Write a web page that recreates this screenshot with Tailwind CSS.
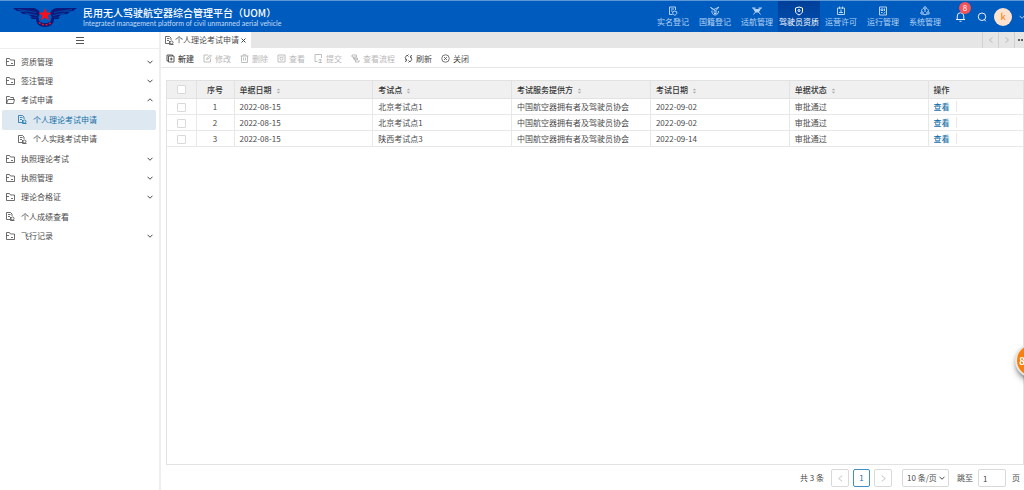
<!DOCTYPE html>
<html lang="zh-CN">
<head>
    <meta charset="UTF-8">
    <meta name="viewport" content="width=device-width, initial-scale=1.0">
    <title>民用无人驾驶航空器综合管理平台（UOM）</title>
    <script src="https://cdn.jsdelivr.net/npm/@tailwindcss/browser@4"></script>
</head>
<body class="h-screen flex flex-col overflow-hidden bg-white text-[8px] leading-[12px] text-[#4a4a4a] font-['Noto_Sans_CJK_SC',sans-serif]">
    <!-- 图标 -->
    <svg class="hidden">
        <symbol id="i-folder" viewBox="0 0 9 8" fill="none" stroke="currentColor" stroke-width=".8"><path d="M.5 7.500v-7h3l1 1.500h4v5.500zM.5 3.500h2.500M5 5.500h2"/></symbol>
        <symbol id="i-folder-open" viewBox="0 0 9 8" fill="none" stroke="currentColor" stroke-width=".8"><path d="M.5 7.500v-7h3l1 1h3v2M.5 7.500l1.500-4h6.500l-1 4z"/></symbol>
        <symbol id="i-doc" viewBox="0 0 9 9" fill="none" stroke="currentColor" stroke-width=".8"><path d="M4 7.500H.5v-7h4l1.500 1.500v2M2 2.500h2.500M2 4.500h2"/><circle cx="6.500" cy="6.500" r="1.500"/><path d="M4.500 5v3.500h4"/></symbol>
        <symbol id="i-down" viewBox="0 0 12 12" fill="none" stroke="currentColor" stroke-width="2"><path d="M1 3.500l5 5 5-5"/></symbol>
        <symbol id="i-up" viewBox="0 0 12 12" fill="none" stroke="currentColor" stroke-width="2"><path d="M1 8.500l5-5 5 5"/></symbol>
        <symbol id="i-left" viewBox="0 0 12 12" fill="none" stroke="currentColor" stroke-width="1.500"><path d="M9 1L3 6l6 5"/></symbol>
        <symbol id="i-right" viewBox="0 0 12 12" fill="none" stroke="currentColor" stroke-width="1.500"><path d="M3 1l6 5-6 5"/></symbol>
        <symbol id="i-sort" viewBox="0 0 10 12" fill="currentColor"><path d="M5 1l3.500 3.500h-7zM5 11l3.500-3.500h-7z"/></symbol>
    </svg>

    <!-- 顶部导航 -->
    <header class="h-8 shrink-0 flex items-center bg-[#005bbf] border-t border-[#5d97d6] text-white">
        <svg class="w-16 h-5 ml-[13px] shrink-0" viewBox="0 0 64 20">
            <g fill="#0b1a7c">
                <path d="M0 1h19c4 0 7 2 8 5l-2 5-6-1-3-2h4L10 7 7 5h9L4 4z"/>
                <path d="M64 1H45c-4 0-7 2-8 5l2 5 6-1 3-2h-4l10-1 3-2h-9l12-1z"/>
                <path d="M17 10l9 1c-1 3 2 5 6 5s7-2 6-5l9-1-2 2h-4c0 5-4 8-9 8s-9-3-9-8h-4z"/>
            </g>
            <path stroke="#005bbf" stroke-width=".7" d="M5 2.500l18 3M12 6l12 2.500M59 2.500l-18 3M52 6L40 8.500"/>
            <path fill="#f5101c" d="M32 1l1.700 4.600 4.900.2-3.900 3 1.400 4.700L32 10.800l-4.100 2.700 1.400-4.700-3.900-3 4.900-.2z"/>
            <path stroke="#f5101c" stroke-width="1.500" stroke-dasharray="2 1.500" fill="none" d="M26 15.500c3 3 9 3 12 0"/>
        </svg>
        <div class="ml-1.5 whitespace-nowrap">
            <h1 class="text-[10px] leading-[12px] font-medium">民用无人驾驶航空器综合管理平台（UOM）</h1>
            <p class="text-[7px] leading-[8px] text-[#c5dcf5] font-['Lato',sans-serif]">Integrated management platform of civil unmanned aerial vehicle</p>
        </div>
        <nav class="ml-auto self-stretch flex text-[#b4d2f2] whitespace-nowrap">
            <a href="#" class="w-[42px] flex flex-col items-center pt-[5px]">
                <svg class="size-[10px]" viewBox="0 0 20 20" fill="none" stroke="currentColor" stroke-width="2"><path d="M9 17H3V2h12v6M6 6h6M6 10h3"/><path d="M13.500 10l4 1.500v3c0 2-2 3-4 4-2-1-4-2-4-4v-3z"/></svg>
                <span>实名登记</span>
            </a>
            <a href="#" class="w-[42px] flex flex-col items-center pt-[5px]">
                <svg class="size-[10px]" viewBox="0 0 20 20" fill="none" stroke="currentColor" stroke-width="2"><path d="M1 3l7 4 10-5-7 8zM4 9c-1 5 2 9 6 9s7-3 7-8M7 12h7M8 15h5"/></svg>
                <span>国籍登记</span>
            </a>
            <a href="#" class="w-[42px] flex flex-col items-center pt-[5px]">
                <svg class="size-[10px]" viewBox="0 0 20 20" fill="none" stroke="currentColor" stroke-width="2"><path d="M0 4h7M13 4h7M7 12l-4 5M13 12l4 5"/><path fill="currentColor" d="M3 5l5 2h4l5-2-4 7H7z"/></svg>
                <span>适航管理</span>
            </a>
            <a href="#" class="w-[42px] flex flex-col items-center pt-[5px] bg-linear-to-b from-[#003f99] to-[#0050b0] text-white" aria-current="page">
                <svg class="size-[10px]" viewBox="0 0 20 20" fill="none" stroke="currentColor" stroke-width="2"><path d="M10 2l7 2v6c0 4-3 6-7 8-4-2-7-4-7-8V4z"/><circle cx="10" cy="9" r="2"/></svg>
                <span>驾驶员资质</span>
            </a>
            <a href="#" class="w-[42px] flex flex-col items-center pt-[5px]">
                <svg class="size-[10px]" viewBox="0 0 20 20" fill="none" stroke="currentColor" stroke-width="2"><path d="M3 4h14v13H3zM7 1v5M13 1v5M10 7v5M6 13h8"/></svg>
                <span>运营许可</span>
            </a>
            <a href="#" class="w-[42px] flex flex-col items-center pt-[5px]">
                <svg class="size-[10px]" viewBox="0 0 20 20" fill="none" stroke="currentColor" stroke-width="2"><path d="M3 2h14v16H3zM6 6h4v3H6zM13 5v5M6 13h3M11 15l4-3"/></svg>
                <span>运行管理</span>
            </a>
            <a href="#" class="w-[42px] flex flex-col items-center pt-[5px]">
                <svg class="size-[10px]" viewBox="0 0 20 20" fill="none" stroke="currentColor" stroke-width="2"><circle cx="10" cy="4" r="2.500"/><circle cx="4" cy="14" r="2.500"/><circle cx="16" cy="14" r="2.500"/><path d="M7 5c-3 1-4 3-4 6M13 5c3 1 4 3 4 6M6 16c2 2 6 2 8 0M10 7v5"/></svg>
                <span>系统管理</span>
            </a>
        </nav>
        <button class="relative ml-[9px]" aria-label="通知">
            <svg class="size-[11px]" viewBox="0 0 22 22" fill="none" stroke="currentColor" stroke-width="1.800"><path d="M2 17h18M4.500 17V10a6.500 6.500 0 0 1 13 0v7M9 20.500h4"/></svg>
            <span class="absolute -top-[9px] left-[4px] size-3 rounded-full bg-[#f5535a] text-center">8</span>
        </button>
        <button class="ml-[11px]" aria-label="搜索">
            <svg class="size-[10px]" viewBox="0 0 20 20" fill="none" stroke="currentColor" stroke-width="1.800"><circle cx="10" cy="9.500" r="7.500"/><path d="M14.500 15l3 3.500"/></svg>
        </button>
        <button class="ml-[7px] size-[18px] rounded-full bg-[#fde3cf] text-[#f58a1f] text-[9px] font-medium">k</button>
        <svg class="size-[6px] ml-[7px] -mr-px shrink-0 opacity-70"><use href="#i-down"/></svg>
    </header>

    <div class="flex-1 min-h-0 flex">
        <!-- 侧边菜单 -->
        <aside class="w-[161px] shrink-0 border-r-2 border-[#eee]">
            <button class="w-full h-[17px] flex items-center justify-center border-b border-[#eee]" aria-label="收起菜单">
                <svg class="w-2 h-[7px]" viewBox="0 0 8 7" stroke="#555" shape-rendering="crispEdges"><path d="M0 .5h8M0 3.500h8M0 6.500h8"/></svg>
            </button>
            <nav class="mt-[3px] h-[194px] grid grid-rows-10 pl-0.5 pr-[3px]">
                <a href="#" class="flex items-center pl-1 pr-[3px]"><svg class="w-[9px] h-2 mr-[6px]"><use href="#i-folder"/></svg>资质管理<svg class="size-[6px] ml-auto"><use href="#i-down"/></svg></a>
                <a href="#" class="flex items-center pl-1 pr-[3px]"><svg class="w-[9px] h-2 mr-[6px]"><use href="#i-folder"/></svg>签注管理<svg class="size-[6px] ml-auto"><use href="#i-down"/></svg></a>
                <a href="#" class="flex items-center pl-1 pr-[3px]"><svg class="w-[9px] h-2 mr-[6px]"><use href="#i-folder-open"/></svg>考试申请<svg class="size-[6px] ml-auto"><use href="#i-up"/></svg></a>
                <a href="#" class="flex items-center pl-4 rounded-xs bg-[#dde8f1] text-[#1670a8]" aria-current="page"><svg class="size-[9px] mr-[6px]"><use href="#i-doc"/></svg>个人理论考试申请</a>
                <a href="#" class="flex items-center pl-4"><svg class="size-[9px] mr-[6px]"><use href="#i-doc"/></svg>个人实践考试申请</a>
                <a href="#" class="flex items-center pl-1 pr-[3px]"><svg class="w-[9px] h-2 mr-[6px]"><use href="#i-folder"/></svg>执照理论考试<svg class="size-[6px] ml-auto"><use href="#i-down"/></svg></a>
                <a href="#" class="flex items-center pl-1 pr-[3px]"><svg class="w-[9px] h-2 mr-[6px]"><use href="#i-folder"/></svg>执照管理<svg class="size-[6px] ml-auto"><use href="#i-down"/></svg></a>
                <a href="#" class="flex items-center pl-1 pr-[3px]"><svg class="w-[9px] h-2 mr-[6px]"><use href="#i-folder"/></svg>理论合格证<svg class="size-[6px] ml-auto"><use href="#i-down"/></svg></a>
                <a href="#" class="flex items-center pl-1"><svg class="size-[9px] mr-[6px]"><use href="#i-doc"/></svg>个人成绩查看</a>
                <a href="#" class="flex items-center pl-1 pr-[3px]"><svg class="w-[9px] h-2 mr-[6px]"><use href="#i-folder"/></svg>飞行记录<svg class="size-[6px] ml-auto"><use href="#i-down"/></svg></a>
            </nav>
        </aside>

        <main class="flex-1 min-w-0 flex flex-col">
            <!-- 页签 -->
            <div class="h-4 shrink-0 flex bg-[#e6e6e6]">
                <div class="flex items-center bg-white pl-1 pr-[5px]">
                    <svg class="size-[9px] mr-px"><use href="#i-doc"/></svg>
                    <span>个人理论考试申请</span>
                    <button class="ml-0.5" aria-label="关闭页签"><svg class="size-[5px]" viewBox="0 0 10 10" stroke="currentColor" stroke-width="2"><path d="M1 1l8 8M9 1l-8 8"/></svg></button>
                </div>
                <div class="ml-auto flex text-[#aaa]">
                    <button class="w-4 border-l border-[#d0d0d0] flex items-center justify-center" aria-label="向左"><svg class="size-[6px]"><use href="#i-left"/></svg></button>
                    <button class="w-4 border-l border-[#d0d0d0] flex items-center justify-center" aria-label="向右"><svg class="size-[6px]"><use href="#i-right"/></svg></button>
                    <button class="w-[10px] pl-[3px] border-l border-[#d0d0d0] flex items-center overflow-hidden text-[#333]" aria-label="更多"><svg class="w-2 h-1 shrink-0" viewBox="0 0 8 4" fill="currentColor"><circle cx="1" cy="2" r="1"/><circle cx="4" cy="2" r="1"/><circle cx="7" cy="2" r="1"/></svg></button>
                </div>
            </div>

            <!-- 工具栏 -->
            <div class="h-5 shrink-0 flex items-center gap-[9px] pl-[5px] pt-0.5 border-b border-[#e6e6e6] whitespace-nowrap">
                <button class="flex items-center gap-[3px] font-medium"><svg class="size-[9px]" viewBox="0 0 18 18" fill="none" stroke="currentColor" stroke-width="1.800"><path d="M5 4h11v12H5zM5 14H2V2h11v2M10.500 7v6M7.500 10h6"/></svg>新建</button>
                <button disabled class="flex items-center gap-[3px] text-[#b8b8b8]"><svg class="size-[9px]" viewBox="0 0 18 18" fill="none" stroke="currentColor" stroke-width="1.800"><path d="M11 2H2v14h13V9M7 11l1-3 7-6 2 2-7 6z"/></svg>修改</button>
                <button disabled class="flex items-center gap-[3px] text-[#b8b8b8]"><svg class="size-[9px]" viewBox="0 0 18 18" fill="none" stroke="currentColor" stroke-width="1.800"><path d="M1 4h16M6 4V1.500h6V4M3 4v13h12V4M7 7v6M11 7v6"/></svg>删除</button>
                <button disabled class="flex items-center gap-[3px] text-[#b8b8b8]"><svg class="size-[9px]" viewBox="0 0 18 18" fill="none" stroke="currentColor" stroke-width="1.800"><path d="M2 2h14v14H2zM5 5.500h2M11 5.500h2"/><circle cx="9" cy="9.500" r="3"/></svg>查看</button>
                <button disabled class="flex items-center gap-[3px] text-[#b8b8b8]"><svg class="size-[9px]" viewBox="0 0 18 18" fill="none" stroke="currentColor" stroke-width="1.800"><path d="M7 15H2V1h13v7M12.500 17V10M9.500 13l3-3 3 3M9 17h7"/></svg>提交</button>
                <button disabled class="flex items-center gap-[3px] text-[#b8b8b8]"><svg class="size-[9px]" viewBox="0 0 18 18" fill="none" stroke="currentColor" stroke-width="1.800"><path d="M2 2h9v4H2zM5 6v4h9M7 8h6v4H7zM9 12v4h7v-4"/></svg>查看流程</button>
                <button class="flex items-center gap-[3px]"><svg class="size-[9px]" viewBox="0 0 18 18" fill="none" stroke="currentColor" stroke-width="1.800"><path d="M8 3H5L2.500 7l2 5M2 15l3-1-1-4M10 15h3l2.500-4-2-5M16 3l-3 1 1 4M9 1l-2 2 2 2M9 13l2 2-2 2"/></svg>刷新</button>
                <button class="flex items-center gap-[3px]"><svg class="size-[9px]" viewBox="0 0 18 18" fill="none" stroke="currentColor" stroke-width="1.500"><circle cx="9" cy="9" r="7.500"/><path d="M6 6l6 6M12 6l-6 6"/></svg>关闭</button>
            </div>

            <!-- 数据表格 -->
            <div class="flex-1 min-h-0 mt-3 ml-[5px] border border-[#e2e2e2]">
                <table class="w-full table-fixed border-collapse whitespace-nowrap">
                    <colgroup>
                        <col class="w-[29px]">
                        <col class="w-[38px]">
                        <col><col><col><col><col>
                        <col class="w-[95px]">
                    </colgroup>
                    <thead class="bg-[#f0f0f0] text-left text-[#333] [&_th]:pt-px [&_th]:font-medium [&_th]:border-r [&_th]:border-b [&_th]:border-[#e2e2e2] [&_th:last-child]:border-r-0">
                        <tr class="h-[17px]">
                            <th><input type="checkbox" aria-label="全选" class="block mx-auto size-[9px] appearance-none border border-[#d9d9d9] rounded-[1px] bg-white"></th>
                            <th class="text-center">序号</th>
                            <th class="pl-[5px]">单据日期<svg class="inline w-[5px] h-[6px] ml-1 text-[#aaa]"><use href="#i-sort"/></svg></th>
                            <th class="pl-[5px]">考试点<svg class="inline w-[5px] h-[6px] ml-1 text-[#aaa]"><use href="#i-sort"/></svg></th>
                            <th class="pl-[5px]">考试服务提供方<svg class="inline w-[5px] h-[6px] ml-1 text-[#aaa]"><use href="#i-sort"/></svg></th>
                            <th class="pl-[5px]">考试日期<svg class="inline w-[5px] h-[6px] ml-1 text-[#aaa]"><use href="#i-sort"/></svg></th>
                            <th class="pl-[5px]">单据状态<svg class="inline w-[5px] h-[6px] ml-1 text-[#aaa]"><use href="#i-sort"/></svg></th>
                            <th class="pl-[5px]">操作</th>
                        </tr>
                    </thead>
                    <tbody class="[&_td]:pt-0.5 [&_td]:border-r [&_td]:border-b [&_td]:border-[#e8e8e8] [&_td:last-child]:border-r-0">
                        <tr class="h-4">
                            <td><input type="checkbox" aria-label="选择第1行" class="block mx-auto size-[9px] appearance-none border border-[#d9d9d9] rounded-[1px] bg-white"></td>
                            <td class="text-center">1</td>
                            <td class="pl-[5px]">2022-08-15</td>
                            <td class="pl-[5px]">北京考试点1</td>
                            <td class="pl-[5px]">中国航空器拥有者及驾驶员协会</td>
                            <td class="pl-[5px]">2022-09-02</td>
                            <td class="pl-[5px]">审批通过</td>
                            <td class="pl-[5px]"><a href="#" class="pr-[6px] border-r border-[#e8e8e8] font-medium text-[#1670a8]">查看</a></td>
                        </tr>
                        <tr class="h-4">
                            <td><input type="checkbox" aria-label="选择第2行" class="block mx-auto size-[9px] appearance-none border border-[#d9d9d9] rounded-[1px] bg-white"></td>
                            <td class="text-center">2</td>
                            <td class="pl-[5px]">2022-08-15</td>
                            <td class="pl-[5px]">北京考试点1</td>
                            <td class="pl-[5px]">中国航空器拥有者及驾驶员协会</td>
                            <td class="pl-[5px]">2022-09-02</td>
                            <td class="pl-[5px]">审批通过</td>
                            <td class="pl-[5px]"><a href="#" class="pr-[6px] border-r border-[#e8e8e8] font-medium text-[#1670a8]">查看</a></td>
                        </tr>
                        <tr class="h-4">
                            <td><input type="checkbox" aria-label="选择第3行" class="block mx-auto size-[9px] appearance-none border border-[#d9d9d9] rounded-[1px] bg-white"></td>
                            <td class="text-center">3</td>
                            <td class="pl-[5px]">2022-08-15</td>
                            <td class="pl-[5px]">陕西考试点3</td>
                            <td class="pl-[5px]">中国航空器拥有者及驾驶员协会</td>
                            <td class="pl-[5px]">2022-09-14</td>
                            <td class="pl-[5px]">审批通过</td>
                            <td class="pl-[5px]"><a href="#" class="pr-[6px] border-r border-[#e8e8e8] font-medium text-[#1670a8]">查看</a></td>
                        </tr>
                    </tbody>
                </table>
            </div>

            <!-- 分页 -->
            <div class="h-[25px] shrink-0 flex items-center justify-end pt-px pr-1 whitespace-nowrap">
                <span class="mr-[7px]">共 3 条</span>
                <button class="w-[18px] h-[18px] mr-1 flex items-center justify-center border border-[#d9d9d9] rounded-xs text-[#bbb]" aria-label="上一页"><svg class="size-[7px]"><use href="#i-left"/></svg></button>
                <button class="w-[17px] h-[18px] mr-1 border border-[#3f8fc4] rounded-xs text-[#1670a8]">1</button>
                <button class="w-[18px] h-[18px] mr-[10px] flex items-center justify-center border border-[#d9d9d9] rounded-xs text-[#bbb]" aria-label="下一页"><svg class="size-[7px]"><use href="#i-right"/></svg></button>
                <div class="relative mr-2">
                    <select aria-label="每页条数" class="block w-[47px] h-[18px] pl-1 appearance-none border border-[#d9d9d9] rounded-xs bg-white"><option>10 条/页</option></select>
                    <svg class="absolute right-[4px] top-[6px] size-[6px] pointer-events-none"><use href="#i-down"/></svg>
                </div>
                <label for="jump" class="mr-[5px]">跳至</label>
                <input id="jump" type="text" value="1" class="w-7 h-[18px] pl-1 border border-[#d9d9d9] rounded-xs">
                <span class="ml-[6px]">页</span>
            </div>
        </main>
    </div>

    <!-- 悬浮客服 -->
    <button class="fixed -right-[26px] top-[343px] size-[35px] rounded-full border-2 border-[#e8e8e8] bg-[#f9800f] shadow-md shadow-black/40 text-white text-[10px] font-bold text-left pl-0.5" aria-label="客服">8</button>
</body>
</html>
